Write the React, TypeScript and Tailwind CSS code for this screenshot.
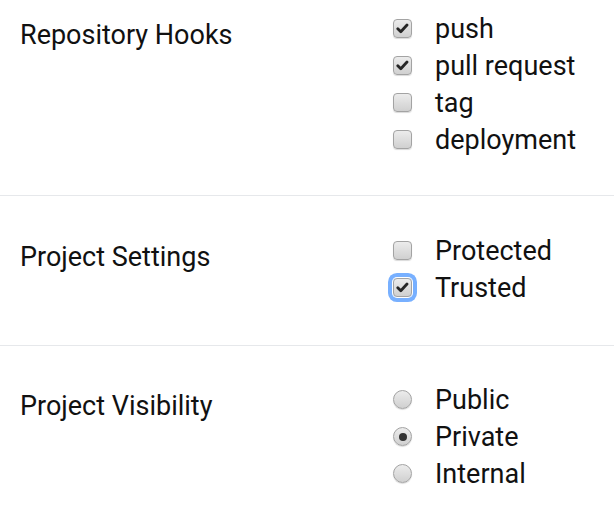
import React from 'react'

type Opt = { label: string; checked?: boolean; focused?: boolean }

function Check({ checked, focused }: { checked?: boolean; focused?: boolean }) {
  return (
    <span
      className={
        'flex h-[19px] w-[19px] shrink-0 items-center justify-center rounded-[4px] border border-[#a3a3a3] bg-gradient-to-b from-[#ececec] to-[#d0d0d0] shadow-[0_1px_1px_rgba(0,0,0,0.15)] ' +
        (focused ? 'ring-[4px] ring-[#78b0ff] ring-offset-[1px]' : '')
      }
    >
      {checked && (
        <svg width="13" height="11" viewBox="0 0 13 11">
          <path d="M1.8 5.8 L4.8 8.8 L11 2" fill="none" stroke="#262626" strokeWidth="2.8" strokeLinecap="round" strokeLinejoin="round" />
        </svg>
      )}
    </span>
  )
}

function Radio({ checked }: { checked?: boolean }) {
  return (
    <span className="flex h-[19px] w-[19px] shrink-0 items-center justify-center rounded-full border border-[#a3a3a3] bg-gradient-to-b from-[#ececec] to-[#d0d0d0] shadow-[0_1px_1px_rgba(0,0,0,0.15)]">
      {checked && <span className="h-[8px] w-[8px] rounded-full bg-[#333]" />}
    </span>
  )
}

function Section({
  title,
  options,
  radio,
  className,
}: {
  title: string
  options: Opt[]
  radio?: boolean
  className: string
}) {
  return (
    <div className={'flex ' + className}>
      <div className="w-[393px] shrink-0 pl-5 pt-[7px] text-[27px] leading-[37px]">{title}</div>
      <div className="flex flex-col">
        {options.map((o) => (
          <label key={o.label} className="flex h-[37px] items-center gap-[23px] text-[27px]">
            {radio ? <Radio checked={o.checked} /> : <Check checked={o.checked} focused={o.focused} />}
            <span className="pt-[2px]">{o.label}</span>
          </label>
        ))}
      </div>
    </div>
  )
}

export default function App() {
  return (
    <div className="min-h-[507px] bg-white text-[#111]" style={{ fontFamily: 'Roboto, sans-serif' }}>
      <Section
        className="pt-[10px] pb-[37px]"
        title="Repository Hooks"
        options={[
          { label: 'push', checked: true },
          { label: 'pull request', checked: true },
          { label: 'tag' },
          { label: 'deployment' },
        ]}
      />
      <div className="h-px bg-[#e6e8eb]" />
      <Section
        className="pt-[36px] pb-[39px]"
        title="Project Settings"
        options={[{ label: 'Protected' }, { label: 'Trusted', checked: true, focused: true }]}
      />
      <div className="h-px bg-[#e6e8eb]" />
      <Section
        className="pt-[35px] pb-[16px]"
        radio
        title="Project Visibility"
        options={[{ label: 'Public' }, { label: 'Private', checked: true }, { label: 'Internal' }]}
      />
    </div>
  )
}
